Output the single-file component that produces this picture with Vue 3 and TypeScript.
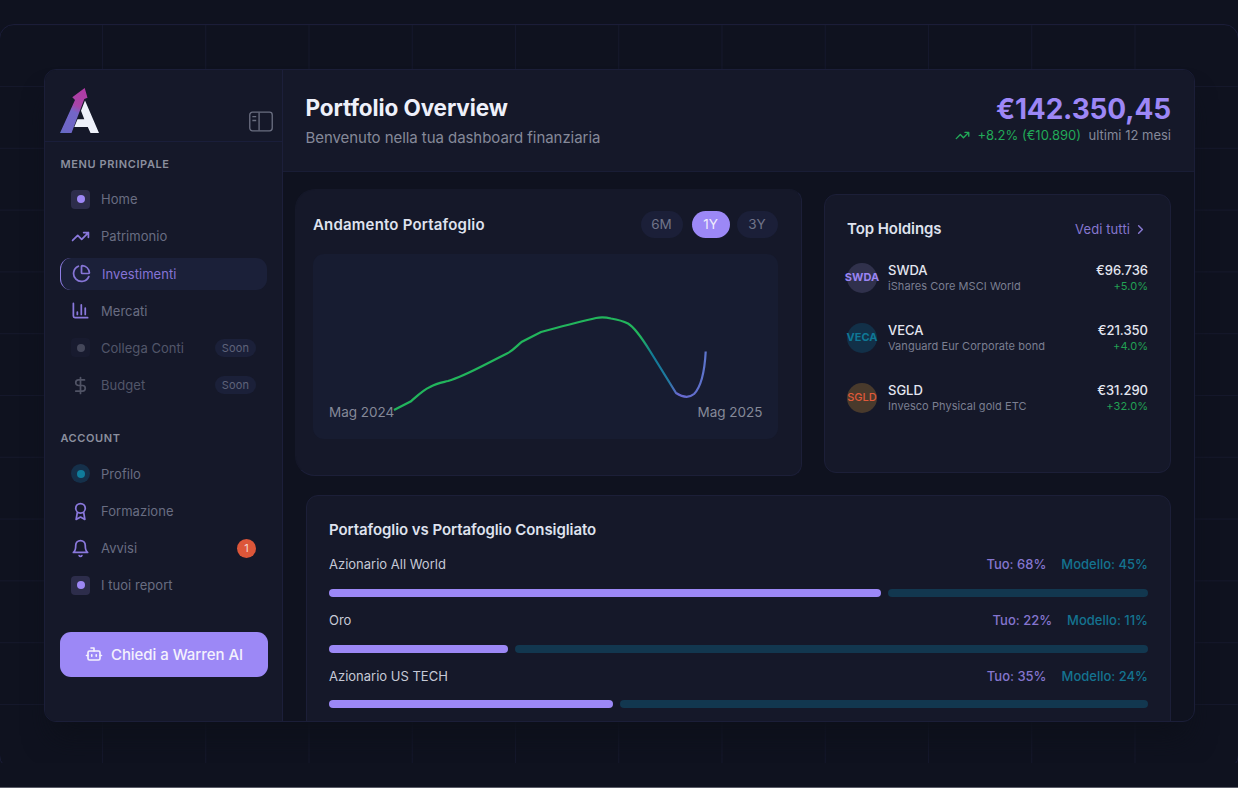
<script setup lang="ts">
interface NavItem {
  label: string
  icon: string
  active?: boolean
  muted?: boolean
  soon?: boolean
  badge?: number
}

const mainMenu: NavItem[] = [
  { label: 'Home', icon: 'dot' },
  { label: 'Patrimonio', icon: 'trend' },
  { label: 'Investimenti', icon: 'pie', active: true },
  { label: 'Mercati', icon: 'bars' },
  { label: 'Collega Conti', icon: 'dot', muted: true, soon: true },
  { label: 'Budget', icon: 'dollar', muted: true, soon: true },
]

const accountMenu: NavItem[] = [
  { label: 'Profilo', icon: 'round' },
  { label: 'Formazione', icon: 'award' },
  { label: 'Avvisi', icon: 'bell', badge: 1 },
  { label: 'I tuoi report', icon: 'dot' },
]

const groups = [
  { title: 'MENU PRINCIPALE', items: mainMenu },
  { title: 'ACCOUNT', items: accountMenu },
]

const iconPaths: Record<string, string> = {
  trend: 'M16 7h6v6 M22 7l-8.5 8.5-5-5L2 17',
  pie: 'M21 12c.552 0 1.005-.449.95-.998a10 10 0 0 0-8.953-8.951c-.55-.055-.998.398-.998.95v8a1 1 0 0 0 1 1z M21.21 15.89A10 10 0 1 1 8 2.83',
  bars: 'M3 3v16a2 2 0 0 0 2 2h16 M18 17V9 M13 17V5 M8 17v-3',
  dollar: 'M12 2v20 M17 5H9.5a3.5 3.5 0 0 0 0 7h5a3.5 3.5 0 0 1 0 7H6',
  award: 'M18 8a6 6 0 1 1-12 0a6 6 0 1 1 12 0z M8 13l-1.5 9 5.5-3 5.5 3L16 13',
  bell: 'M6 8a6 6 0 0 1 12 0c0 7 3 9 3 9H3s3-2 3-9 M10.3 21a1.94 1.94 0 0 0 3.4 0',
}

const ranges = ['6M', '1Y', '3Y']

const holdings = [
  { id: 'swda', code: 'SWDA', name: 'iShares Core MSCI World', value: '€96.736', change: '+5.0%' },
  { id: 'veca', code: 'VECA', name: 'Vanguard Eur Corporate bond', value: '€21.350', change: '+4.0%' },
  { id: 'sgld', code: 'SGLD', name: 'Invesco Physical gold ETC', value: '€31.290', change: '+32.0%' },
]

const allocations = [
  { name: 'Azionario All World', own: 68, model: 45 },
  { name: 'Oro', own: 22, model: 11 },
  { name: 'Azionario US TECH', own: 35, model: 24 },
]
</script>

<template>
  <div class="page">
    <div class="clip">
      <div class="frame">
        <div class="dash">
          <aside class="side">
            <div class="brand">
              <svg class="logo" viewBox="0 0 39 45" width="39" height="45">
                <defs>
                  <linearGradient id="arrow" x1="0" y1="45" x2="22" y2="0" gradientUnits="userSpaceOnUse">
                    <stop offset="0" stop-color="#5e6fc4" />
                    <stop offset=".1" stop-color="#6d66c6" />
                    <stop offset=".5" stop-color="#7366c8" />
                    <stop offset=".64" stop-color="#a844a8" />
                    <stop offset="1" stop-color="#b03aa4" />
                  </linearGradient>
                </defs>
                <path d="M0 45L15 12L12.300 9.300L24.700 0L27.500 9.700L24.300 11L11.500 45z" fill="url(#arrow)" />
                <path d="M25 12.500L39 45H30.500L27.800 39H14.300L17.500 31.300H24.300L21 22.700z" fill="#eef1fa" />
              </svg>
              <svg class="toggle" viewBox="0 0 25 21" width="24" height="21" fill="none" stroke="#6a6e80" stroke-width="1.4">
                <rect x=".8" y=".8" width="23.4" height="19.4" rx="2.8" />
                <path d="M10.5 1v19M3.500 5.500h4M3.500 9.500h4" />
              </svg>
            </div>
            <nav v-for="g in groups" :key="g.title" class="group">
              <h3>{{ g.title }}</h3>
              <div v-for="i in g.items" :key="i.label" class="item" :class="{ active: i.active, muted: i.muted }">
                <span v-if="i.icon === 'dot' || i.icon === 'round'" class="tile" :class="i.icon"><i /></span>
                <svg v-else class="ico" viewBox="0 0 24 24"><path :d="iconPaths[i.icon]" /></svg>
                <span class="lbl">{{ i.label }}</span>
                <span v-if="i.soon" class="soon">Soon</span>
                <span v-if="i.badge" class="badge">{{ i.badge }}</span>
              </div>
            </nav>
            <button class="ask">
              <svg class="bot" viewBox="0 0 24 24">
                <path d="M12 8V4H8 M2 14h2 M20 14h2 M15 13v2 M9 13v2" />
                <rect x="4" y="8" width="16" height="12" rx="2" />
              </svg>
              <span>Chiedi a Warren AI</span>
            </button>
          </aside>

          <main class="main">
            <header class="head">
              <div>
                <h1>Portfolio Overview</h1>
                <p class="sub">Benvenuto nella tua dashboard finanziaria</p>
              </div>
              <div class="total">
                <div class="amount">€142.350,45</div>
                <div class="perf">
                  <svg class="up" viewBox="0 0 24 24"><path :d="iconPaths.trend" /></svg>
                  <span class="gain">+8.2% (€10.890)</span>
                  <span class="period">ultimi 12 mesi</span>
                </div>
              </div>
            </header>

            <div class="body">
              <div class="row">
                <section class="card trend">
                  <div class="cardhead">
                    <h2>Andamento Portafoglio</h2>
                    <div class="ranges">
                      <span v-for="r in ranges" :key="r" class="range" :class="['r' + r, { on: r === '1Y' }]">{{ r }}</span>
                    </div>
                  </div>
                  <div class="plot">
                    <svg class="curve" viewBox="313 254 465 185" width="465" height="185">
                      <defs>
                        <linearGradient id="line" x1="394" y1="0" x2="706" y2="0" gradientUnits="userSpaceOnUse">
                          <stop offset="0" stop-color="#22b55c" />
                          <stop offset=".79" stop-color="#22b55c" />
                          <stop offset=".83" stop-color="#117a98" />
                          <stop offset=".88" stop-color="#217aa0" />
                          <stop offset=".91" stop-color="#6a68d0" />
                          <stop offset="1" stop-color="#5c74cc" />
                        </linearGradient>
                      </defs>
                      <path
                        d="M394 410L411 401.300C416 397 423 390 430 387C437 383 442 382.500 448 381C464 376.500 477 368.500 507 353.500C514 350 517 345.500 522 341.700L541 332C556 328 580 321.500 596 318Q603 316.500 611 318.500C617 319.500 623 321 628 323.500C634 327 641 336.500 650 351L676 393Q687 400 694 394C701 387 704.500 374 705.700 351.500"
                        fill="none" stroke="url(#line)" stroke-width="2.2"
                      />
                    </svg>
                    <div class="axis"><span>Mag 2024</span><span>Mag 2025</span></div>
                  </div>
                </section>

                <section class="card holds">
                  <div class="cardhead">
                    <h2>Top Holdings</h2>
                    <span class="all">Vedi tutti
                      <svg class="chev" viewBox="0 0 24 24"><path d="M9 18l6-6-6-6" /></svg>
                    </span>
                  </div>
                  <div v-for="h in holdings" :key="h.id" class="hold">
                    <span class="coin" :class="h.id"><b>{{ h.code }}</b></span>
                    <div class="who">
                      <div class="code">{{ h.code }}</div>
                      <div class="name">{{ h.name }}</div>
                    </div>
                    <div class="val">
                      <div class="code">{{ h.value }}</div>
                      <div class="chg">{{ h.change }}</div>
                    </div>
                  </div>
                </section>
              </div>

              <section class="card compare">
                <h2>Portafoglio vs Portafoglio Consigliato</h2>
                <div v-for="a in allocations" :key="a.name" class="alloc">
                  <div class="allochead">
                    <span>{{ a.name }}</span>
                    <span class="pct"><span class="own">Tuo: {{ a.own }}%</span><span class="model">Modello: {{ a.model }}%</span></span>
                  </div>
                  <div class="bars">
                    <span class="bar a" :style="{ flexGrow: a.own }" />
                    <span class="bar b" :style="{ flexGrow: 100 - a.own }" />
                  </div>
                </div>
              </section>
            </div>
          </main>
        </div>
      </div>
    </div>
  </div>
</template>

<style>
body { background: #0f121f; overflow: hidden; }
</style>

<style scoped>
* { box-sizing: border-box; }
h1, h2, h3, p { margin: 0; }
svg { display: block; flex: none; }
.page { height: 788px; padding-top: 24px; background: #0f121f; border-bottom: 1px solid #5b5d68; font-family: Inter, "Liberation Sans", sans-serif; overflow: hidden; color: #e4e6f0; }
.clip { height: 739px; margin: 0 -1px; overflow: hidden; }
.frame {
  height: 746px; border: 1px solid #1b1d38; border-radius: 15px; padding: 44px 43px 0 44px;
  background-image:
    repeating-linear-gradient(90deg, #15182c 0 1px, transparent 1px 103.25px),
    repeating-linear-gradient(180deg, #15182b 0 1px, transparent 1px 61.8px);
  background-origin: border-box;
  background-size: 103.25px 100%, 100% 61.8px;
  background-position: 103px 0, 0 62px;
}
.dash { display: flex; width: 1151px; height: 653px; border: 1px solid #1b1e38; border-radius: 12px; background: #0f121f; overflow: hidden; box-shadow: 0 22px 28px -8px #0d101a; }
.side { width: 238px; flex: none; background: #151829; border-right: 1px solid #1c1f3a; }
.brand { display: flex; justify-content: space-between; height: 71.500px; padding: 18px 9px 0 15px; border-bottom: 1px solid #1a1e3a; }
.toggle { margin-top: 22.500px; }
.group { padding: 0 15px; }
.group h3 { height: 14px; margin: 15px 0 12.700px; padding-left: .4px; font-size: 11px; line-height: 14px; font-weight: 600; letter-spacing: .62px; color: #8b8f9e; }
.group + .group h3 { margin-top: 29.800px; margin-bottom: 13px; }
.item { display: flex; align-items: center; height: 32px; margin-bottom: 5.200px; padding: 0 11px; font-size: 13px; letter-spacing: .04px; color: #696d82; }
.ico { width: 19px; height: 19px; fill: none; stroke: #8a78dc; stroke-width: 2.200; stroke-linecap: round; stroke-linejoin: round; }
.lbl { margin-left: 11px; flex: 1; }
.active { border-radius: 11px; background: #1b2039; border-left: 1.500px solid #8f7ee6; color: #8674d6; }
.active .ico { stroke: #8675d6; }
.muted { color: #525669; }
.muted .ico { stroke: #505365; }
.tile { display: flex; align-items: center; justify-content: center; width: 19px; height: 19px; border-radius: 4px; background: #2d2d4b; }
.tile i { width: 8px; height: 8px; border-radius: 50%; background: #9d87f5; }
.tile.round { border-radius: 50%; background: #15304a; }
.tile.round i { background: #107c9b; }
.muted .tile { background: #181b2f; }
.muted .tile i { background: #44475a; }
.soon { height: 18.500px; padding: 0 7px; border-radius: 10px; background: #1b2039; font-size: 11px; line-height: 18px; color: #5f6379; letter-spacing: .1px; }
.badge { width: 19px; height: 19px; border-radius: 50%; background: #dc5639; color: #f3d8d4; font-size: 11px; line-height: 19px; text-align: center; }
.ask { display: flex; align-items: center; justify-content: center; gap: 8px; width: 208px; height: 45px; margin: 30.500px 0 0 15px; padding: 0; border: 0; border-radius: 11px; background: #9c88f6; color: #f4f1fd; font: 500 15px Inter, sans-serif; letter-spacing: -.05px; }
.bot { width: 18px; height: 18px; fill: none; stroke: #f4f1fd; stroke-width: 2.200; stroke-linecap: round; stroke-linejoin: round; }

.main { flex: 1; min-width: 0; }
.head { display: flex; justify-content: space-between; height: 102px; padding: 24px 23px 0 22.500px; background: #151829; border-bottom: 1px solid #191d35; }
h1 { font-size: 22.500px; line-height: 28px; font-weight: 700; letter-spacing: -.1px; color: #eef0fa; }
.sub { margin-top: 6px; font-size: 15px; line-height: 20px; letter-spacing: -.06px; color: #858999; }
.total { display: flex; flex-direction: column; align-items: flex-end; }
.amount { font-size: 28px; line-height: 30px; height: 32px; font-weight: 700; letter-spacing: -.15px; color: #9d87f6; }
.perf { display: flex; align-items: center; height: 18px; font-size: 13px; color: #858999; }
.up { width: 15px; height: 15px; margin-right: 8px; fill: none; stroke: #22a958; stroke-width: 2.200; stroke-linecap: round; stroke-linejoin: round; }
.gain { margin-right: 7.500px; color: #22a958; }

.body { padding: 17px 23px 0 12px; }
.row { display: flex; gap: 22px; align-items: flex-start; }
.card { border: 1px solid #1c1f38; border-radius: 12px; background: #151829; }
.cardhead { display: flex; align-items: center; justify-content: space-between; }
h2 { font-size: 15px; line-height: 20px; font-weight: 600; letter-spacing: -.07px; color: #dfe2ee; }
.trend { width: 507px; height: 287px; padding: 21px 23.500px 0 17px; border-top-color: #151829; border-left-color: #151829; border-radius: 20px 12px 12px 20px; }
.trend .cardhead { height: 27px; }
.trend h2 { letter-spacing: .2px; }
.ranges { display: flex; }
.range { height: 27px; border-radius: 14px; background: #1b1f38; color: #707488; font-size: 13.500px; line-height: 27px; text-align: center; width: 41px; }
.r6M { width: 42px; margin-right: 9px; }
.r1Y { width: 38px; margin-right: 7px; }
.range.on { background: #9c88f6; color: #f0edfc; }
.plot { position: relative; height: 185px; margin-top: 16px; border-radius: 11px; background: #171c31; }
.axis { position: absolute; left: 16px; right: 15px; bottom: 18px; display: flex; justify-content: space-between; font-size: 13.500px; line-height: 18px; color: #858998; }
.curve { width: 465px; height: 185px; }

.holds { width: 347px; height: 279px; margin-top: 5px; padding: 23px 22px 0; }
.holds .cardhead { height: 22px; }
.all { display: flex; align-items: center; font-size: 13px; color: #8677cf; letter-spacing: .1px; }
.chev { width: 15px; height: 15px; margin-left: 3px; fill: none; stroke: #8677cf; stroke-width: 2.400; stroke-linecap: round; stroke-linejoin: round; }
.hold { display: flex; height: 60px; padding-top: 22.500px; }
.coin { display: flex; align-items: center; justify-content: center; width: 30px; height: 30px; margin-top: .8px; border-radius: 50%; font-size: 11px; }
.coin b { font-weight: 700; margin-top: -2px; }
.swda { background: #30314c; color: #9a85f2; }
.veca { background: #123048; color: #0f7896; }
.sgld { background: #493a2c; color: #e0593a; }
.sgld b { font-weight: 500; }
.who { flex: 1; margin-left: 11px; }
.code { height: 16px; font-size: 13px; line-height: 15px; font-weight: 500; color: #e4e6f0; }
.name, .chg { font-size: 11px; line-height: 15px; letter-spacing: .06px; color: #7b7f91; }
.val { text-align: right; }
.chg { color: #22a054; }

.compare { height: 260px; margin: 19px 0 0 10.500px; padding: 24px 22px 0 22.500px; }
.alloc { height: 55.700px; padding-top: 15.400px; }
.allochead { display: flex; justify-content: space-between; font-size: 13px; line-height: 18px; color: #c6c9d6; }
.pct { display: flex; gap: 15px; font-weight: 500; }
.own { color: #8475ce; }
.model { color: #147390; }
.bars { display: flex; gap: 7px; margin-top: 15.600px; }
.bar { height: 8px; border-radius: 4px; flex-basis: 0; background: #12374f; }
.bar.a { background: #9c88f6; }
</style>
